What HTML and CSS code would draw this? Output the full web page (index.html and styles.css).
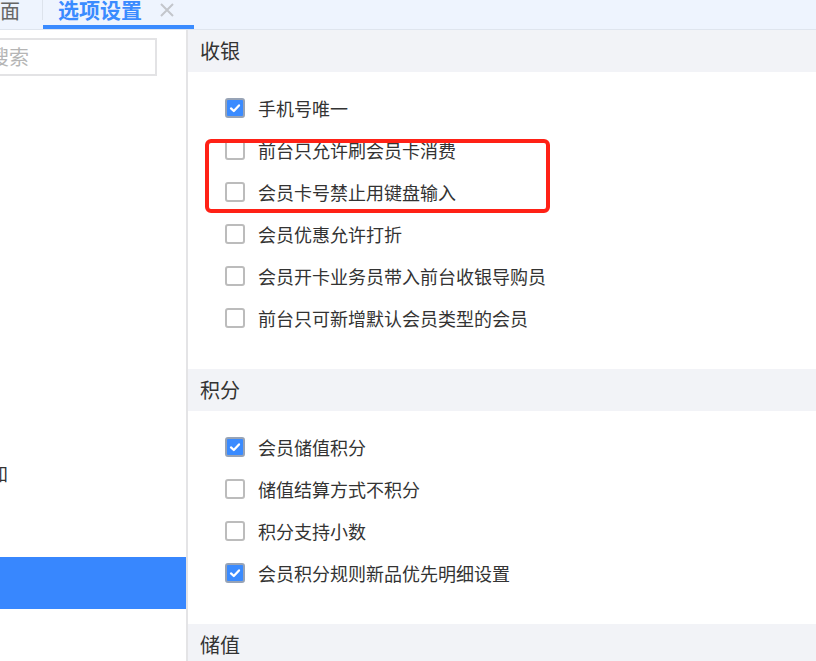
FILE: index.html
```html
<!DOCTYPE html>
<html lang="zh-CN">
<head>
<meta charset="utf-8">
<title>选项设置</title>
<link rel="stylesheet" href="styles.css">
</head>
<body>
<div class="tabs">
  <div class="tab tab-prev">首页界面</div>
  <div class="tab-sep"></div>
  <div class="tab tab-active">
    <span>选项设置</span>
    <svg class="tab-close" width="16" height="16" viewBox="0 0 16 16"><path d="M2 2L14 14M14 2L2 14" stroke="#c3c6cc" stroke-width="2" fill="none"/></svg>
  </div>
</div>
<div class="main">
  <aside class="side">
    <div class="search">搜索</div>
    <ul class="menu">
      <li>收银</li>
      <li>积分</li>
      <li>储值</li>
      <li>会员</li>
      <li>商品</li>
      <li>库存</li>
      <li>打印</li>
      <li class="long">短信通知</li>
      <li>支付</li>
      <li class="on">选项</li>
    </ul>
  </aside>
  <section class="content">
    <div class="group">
      <div class="group-title">收银</div>
      <ul class="opts">
        <li><span class="cb on"><svg viewBox="0 0 20 20"><path d="M5 10.5L8.5 13.8L15 6.8"/></svg></span>手机号唯一</li>
        <li><span class="cb"></span>前台只允许刷会员卡消费</li>
        <li><span class="cb"></span>会员卡号禁止用键盘输入</li>
        <li><span class="cb"></span>会员优惠允许打折</li>
        <li><span class="cb"></span>会员开卡业务员带入前台收银导购员</li>
        <li><span class="cb"></span>前台只可新增默认会员类型的会员</li>
      </ul>
    </div>
    <div class="group">
      <div class="group-title">积分</div>
      <ul class="opts">
        <li><span class="cb on"><svg viewBox="0 0 20 20"><path d="M5 10.5L8.5 13.8L15 6.8"/></svg></span>会员储值积分</li>
        <li><span class="cb"></span>储值结算方式不积分</li>
        <li><span class="cb"></span>积分支持小数</li>
        <li><span class="cb on"><svg viewBox="0 0 20 20"><path d="M5 10.5L8.5 13.8L15 6.8"/></svg></span>会员积分规则新品优先明细设置</li>
      </ul>
    </div>
    <div class="group">
      <div class="group-title">储值</div>
    </div>
  </section>
</div>
<div class="mark"></div>
</body>
</html>
```

FILE: styles.css
```css
* { box-sizing: border-box; }
html, body {
  margin: 0;
  padding: 0;
  background: #ffffff;
  font-family: "Noto Sans CJK SC", "Noto Sans", sans-serif;
  color: #333333;
  overflow: hidden;
  height: 661px;
}
ul { list-style: none; margin: 0; padding: 0; }

.tabs {
  display: flex;
  align-items: flex-start;
  height: 30px;
  background: #eef4fe;
  border-bottom: 1px solid #dfe5ee;
  overflow: hidden;
}
.tab {
  font-size: 20px;
  line-height: 19px;
  height: 29px;
  white-space: nowrap;
}
.tab-prev {
  margin-left: -60px;
  width: 81px;
  color: #666666;
  padding-top: 1px;
}
.tab-sep {
  width: 1px;
  height: 20px;
  margin-left: 21px;
  background: #dde3ec;
}
.tab-active {
  display: flex;
  align-items: flex-start;
  width: 151px;
  padding-left: 15px;
  color: #3a8bff;
  font-size: 21px;
  font-weight: bold;
  border-bottom: 4px solid #3a8bff;
}
.tab-close {
  margin-left: 17px;
  margin-top: 2px;
}

.main {
  display: flex;
  height: 631px;
}
.side {
  width: 188px;
  flex: none;
  border-right: 2px solid #e4e4e6;
  overflow: hidden;
  padding-top: 8px;
}
.search {
  margin-left: -22px;
  width: 179px;
  height: 38px;
  border: 2px solid #e3e3e5;
  padding-left: 9px;
  font-size: 20px;
  line-height: 34px;
  color: #b5b5b5;
}
.menu {
  margin-top: 13px;
}
.menu li {
  height: 52px;
  line-height: 48px;
  font-size: 18px;
  text-indent: -64px;
  white-space: nowrap;
  color: #333333;
}
.menu li.long {
  line-height: 40px;
}
.menu li.on {
  background: #3887fe;
  color: #ffffff;
}

.content {
  flex: 1;
  min-width: 0;
}
.group-title {
  height: 42px;
  background: #f2f3f7;
  padding-left: 12px;
  font-size: 20px;
  line-height: 42px;
  color: #333333;
}
.opts {
  padding: 15px 0 30px 37px;
}
.opts li {
  display: flex;
  align-items: center;
  height: 42px;
  font-size: 18px;
  color: #333333;
}
.cb {
  width: 20px;
  height: 20px;
  border: 2px solid #bcbcbc;
  border-radius: 3px;
  background: #ffffff;
  margin-right: 13px;
  display: flex;
  align-items: center;
  justify-content: center;
  flex: none;
}
.cb.on {
  background: #3a8bff;
  border-color: #97a3b6;
}
.cb svg {
  width: 16px;
  height: 16px;
}
.cb svg path {
  fill: none;
  stroke: #ffffff;
  stroke-width: 2.8;
  stroke-linecap: round;
  stroke-linejoin: round;
}

.mark {
  position: absolute;
  left: 205px;
  top: 139px;
  width: 345px;
  height: 74px;
  border: 4px solid #ff2116;
  border-radius: 6px;
}
```
